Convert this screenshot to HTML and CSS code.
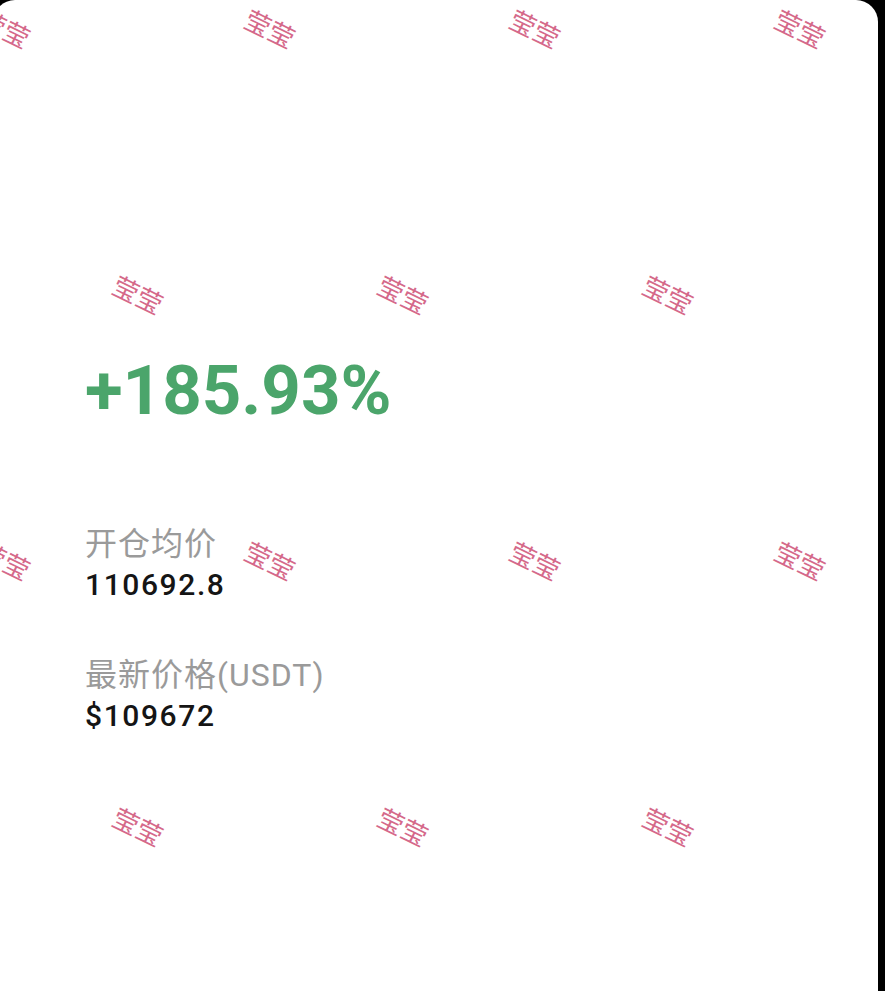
FILE: index.html
```html
<!DOCTYPE html>
<html lang="zh-CN">
<head>
    <meta charset="UTF-8">
    <meta name="viewport" content="width=device-width, initial-scale=1.0">
    <title>持仓详情</title>
    <link rel="stylesheet" href="styles.css">
</head>
<body>
    <div class="card">
        <div class="profit">+185.93%</div>
        <div class="info">
            <div class="label">开仓均价</div>
            <div class="value">110692.8</div>
        </div>
        <div class="info">
            <div class="label">最新价格(USDT)</div>
            <div class="value">$109672</div>
        </div>
    </div>

    <div class="watermarks">
        <div class="wm_row">
            <span>莹莹</span><span>莹莹</span><span>莹莹</span><span>莹莹</span>
        </div>
        <div class="wm_row shifted">
            <span>莹莹</span><span>莹莹</span><span>莹莹</span>
        </div>
        <div class="wm_row">
            <span>莹莹</span><span>莹莹</span><span>莹莹</span><span>莹莹</span>
        </div>
        <div class="wm_row shifted">
            <span>莹莹</span><span>莹莹</span><span>莹莹</span>
        </div>
    </div>
</body>
</html>
```

FILE: styles.css
```css
html, body {
    margin: 0;
    height: 100%;
}
body {
    background-color: #000000;
    font-family: Roboto, "Noto Sans CJK SC", sans-serif;
    overflow: hidden;
    position: relative;
}
.card {
    width: 885px;
    min-height: 100%;
    margin-left: -7px;
    box-sizing: border-box;
    padding: 356px 0 0 92px;
    background-color: #ffffff;
    border-radius: 22px 22px 0 0;
}
.profit {
    font-size: 69px;
    line-height: 70px;
    font-weight: 700;
    color: #4ba56b;
    margin-bottom: 99px;
}
.info {
    margin-bottom: 54px;
}
.label {
    font-size: 32px;
    line-height: 38px;
    letter-spacing: 1px;
    color: #9a9a9a;
}
.value {
    margin-top: 5px;
    font-size: 30px;
    line-height: 34px;
    font-weight: 500;
    letter-spacing: 1.6px;
    color: #151515;
}

/* watermark layer over the page */
.watermarks {
    position: absolute;
    top: -106px;
    left: -127px;
    pointer-events: none;
}
.wm_row {
    display: flex;
    height: 266px;
    align-items: center;
}
.wm_row.shifted {
    padding-left: 133px;
}
.wm_row span {
    width: 265px;
    flex-shrink: 0;
    text-align: center;
    font-family: "Noto Sans CJK SC", sans-serif;
    font-size: 26px;
    font-weight: 400;
    color: #d5698a;
    transform: rotate(26deg);
}
```
